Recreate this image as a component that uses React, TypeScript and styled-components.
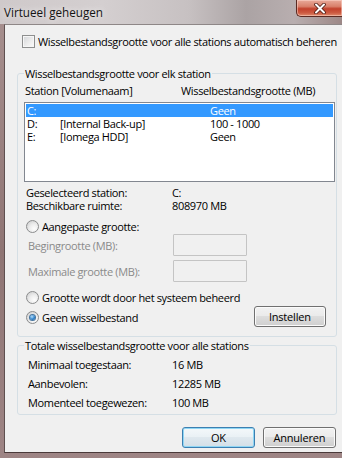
import React from 'react';
import styled, { createGlobalStyle, css } from 'styled-components';

const GlobalStyle = createGlobalStyle`
  html, body {
    margin: 0;
    padding: 0;
  }
  body {
    width: 342px;
    height: 458px;
    overflow: hidden;
    font-family: "Open Sans", "Noto Sans", Arial, sans-serif;
    font-size: 11px;
    letter-spacing: -0.35px;
    color: #000;
  }
`;

const Window = styled.div`
  width: 342px;
  height: 458px;
  display: flex;
  flex-direction: column;
  background: linear-gradient(180deg, #a89190 0%, #8f7574 55%, #9e8585 100%);
`;

const TitleBar = styled.div`
  height: 24px;
  flex: none;
  display: flex;
  align-items: flex-start;
  justify-content: space-between;
  background: linear-gradient(90deg, #cfc9ca 0%, #d4cfd0 30%, #c7c1c2 55%, #aba3a4 72%, #b8aeaf 86%, #9d8887 100%);
`;

const Title = styled.div`
  padding: 5px 0 0 4px;
  font-size: 11.7px;
  letter-spacing: 0;
  line-height: 15px;
  color: #141414;
  text-shadow: 0 0 6px rgba(255, 255, 255, 0.9);
`;

const CloseButton = styled.div`
  width: 46px;
  height: 18px;
  margin-top: -1px;
  box-sizing: border-box;
  border: 1px solid #5a2a22;
  border-right: none;
  border-radius: 0 0 0 5px;
  background: linear-gradient(180deg, #e9aa9a 0%, #d9806b 40%, #c2412c 55%, #cc5a41 80%, #e08c6d 100%);
  box-shadow: inset 0 0 0 1px rgba(255, 220, 210, 0.5);
  display: flex;
  align-items: center;
  justify-content: center;
`;

const Frame = styled.div`
  flex: 1;
  display: flex;
  padding: 0 0 5px 4px;
`;

const Client = styled.div`
  flex: 1;
  display: flex;
  flex-direction: column;
  background: #f0f0f0;
  border-left: 1px solid #5f5050;
  border-top: 1px solid #8e8787;
  border-bottom: 1px solid #4a3a3a;
  padding: 9px 8px 0 12px;
  white-space: nowrap;
`;

const CheckRow = styled.label`
  display: flex;
  align-items: center;
  gap: 3px;
  height: 15px;
  line-height: 15px;
  margin-left: 5px;
`;

const CheckBox = styled.span`
  width: 13px;
  height: 13px;
  box-sizing: border-box;
  flex: none;
  border: 1px solid #8e8f8f;
  background: linear-gradient(135deg, #d3d5d8 0%, #eeeeee 60%, #fbfbfb 100%);
  box-shadow: inset 0 0 0 1px #f6f6f6;
`;

const Group = styled.fieldset<{ $top: number; $bottom: number }>`
  margin: ${p => p.$top}px 0 0 0;
  padding: 0 1px ${p => p.$bottom}px 6px;
  border: 1px solid #d5dfe5;
  border-radius: 3px;
  min-width: 0;
`;

const Legend = styled.legend`
  padding: 0 1px;
  line-height: 15px;
`;

const HeaderRow = styled.div`
  display: grid;
  grid-template-columns: 156px 1fr;
  padding-left: 1px;
  margin-top: 2px;
  line-height: 15px;
`;

const ListBox = styled.div`
  margin-top: 4px;
  height: 80px;
  box-sizing: border-box;
  border: 1px solid #828790;
  background: #fff;
  padding: 1px;
`;

const ListRow = styled.div<{ $selected?: boolean }>`
  display: grid;
  grid-template-columns: 33px 150px 1fr;
  height: 13px;
  line-height: 13px;
  padding-left: 1px;
  ${p =>
    p.$selected &&
    css`
      background: #3399ff;
      color: #fff;
    `}
`;

const InfoGrid = styled.div<{ $top: number; $row: number; $label: number; $indent: number }>`
  display: grid;
  grid-template-columns: ${p => p.$label}px 1fr;
  grid-auto-rows: ${p => p.$row}px;
  align-items: center;
  margin-top: ${p => p.$top}px;
  padding-left: ${p => p.$indent}px;
  line-height: 13px;
`;

const RadioRow = styled.label<{ $top: number }>`
  display: flex;
  align-items: center;
  gap: 3px;
  height: 15px;
  line-height: 15px;
  margin-top: ${p => p.$top}px;
  padding-left: 2px;
`;

const Radio = styled.span<{ $checked?: boolean }>`
  width: 13px;
  height: 13px;
  box-sizing: border-box;
  flex: none;
  border-radius: 50%;
  border: 1px solid #8b8c8d;
  background: radial-gradient(circle at 65% 70%, #fdfdfd 0%, #ececec 45%, #c6c7c8 100%);
  display: flex;
  align-items: center;
  justify-content: center;
  ${p =>
    p.$checked &&
    css`
      &::after {
        content: '';
        width: 5px;
        height: 5px;
        border-radius: 50%;
        background: radial-gradient(circle at 40% 35%, #b9e0fa 0%, #2d82cc 55%, #0e4c86 100%);
        box-shadow: 0 0 0 1px #46749e;
      }
    `}
`;

const SizeRow = styled.div<{ $top: number }>`
  display: flex;
  align-items: center;
  height: 22px;
  margin-top: ${p => p.$top}px;
`;

const DimLabel = styled.span`
  width: 145px;
  padding-left: 4px;
  color: #8a8a8a;
`;

const DimInput = styled.div`
  width: 74px;
  height: 22px;
  box-sizing: border-box;
  border: 1px solid #c4c4c4;
  border-radius: 1px;
  background: #f0f0f0;
`;

const OptionRow = styled.div`
  display: flex;
  align-items: flex-start;
  justify-content: space-between;
  height: 21px;
  margin-top: 1px;
`;

const Button = styled.button<{ $default?: boolean; $width: number }>`
  width: ${p => p.$width}px;
  height: 21px;
  padding: 0;
  font: inherit;
  letter-spacing: -0.2px;
  color: #000;
  border: 1px solid #707070;
  border-radius: 3px;
  background: linear-gradient(180deg, #f2f2f2 0%, #ebebeb 45%, #dddddd 50%, #cfcfcf 100%);
  box-shadow: inset 0 0 0 1px #fbfbfb;
  ${p =>
    p.$default &&
    css`
      border-color: #3c7fb1;
      background: linear-gradient(180deg, #f4f8fa 0%, #eaf1f5 45%, #dfe8ee 50%, #d3dfe7 100%);
      box-shadow: inset 0 0 0 1px #8fd6f4;
    `}
`;

const SetButton = styled(Button)`
  margin-right: 9px;
`;

const ButtonRow = styled.div`
  display: flex;
  justify-content: flex-end;
  gap: 8px;
  margin: 12px 1px 0 0;
`;

const drives = [
  { letter: 'C:', name: '', size: 'Geen', selected: true },
  { letter: 'D:', name: '[Internal Back-up]', size: '100 - 1000' },
  { letter: 'E:', name: '[Iomega HDD]', size: 'Geen' },
];

const totals = [
  ['Minimaal toegestaan:', '16 MB'],
  ['Aanbevolen:', '12285 MB'],
  ['Momenteel toegewezen:', '100 MB'],
];

const CloseGlyph = () => (
  <svg width="14" height="11" viewBox="0 0 14 11">
    <path d="M3 1.5 L11 9.5 M11 1.5 L3 9.5" stroke="#4a1810" strokeWidth="3.6" strokeLinecap="round" />
    <path d="M3 1.5 L11 9.5 M11 1.5 L3 9.5" stroke="#ffffff" strokeWidth="2" strokeLinecap="round" />
  </svg>
);

const App = () => (
  <>
    <GlobalStyle />
    <Window>
      <TitleBar>
        <Title>Virtueel geheugen</Title>
        <CloseButton>
          <CloseGlyph />
        </CloseButton>
      </TitleBar>
      <Frame>
        <Client>
          <CheckRow>
            <CheckBox />
            Wisselbestandsgrootte voor alle stations automatisch beheren
          </CheckRow>

          <Group $top={17} $bottom={9}>
            <Legend>Wisselbestandsgrootte voor elk station</Legend>
            <HeaderRow>
              <span>Station [Volumenaam]</span>
              <span>Wisselbestandsgrootte (MB)</span>
            </HeaderRow>
            <ListBox>
              {drives.map(d => (
                <ListRow key={d.letter} $selected={d.selected}>
                  <span>{d.letter}</span>
                  <span>{d.name}</span>
                  <span>{d.size}</span>
                </ListRow>
              ))}
            </ListBox>
            <InfoGrid $top={4} $row={13} $label={146} $indent={2}>
              <span>Geselecteerd station:</span>
              <span>C:</span>
              <span>Beschikbare ruimte:</span>
              <span>808970 MB</span>
            </InfoGrid>
            <RadioRow $top={7}>
              <Radio />
              Aangepaste grootte:
            </RadioRow>
            <SizeRow $top={0}>
              <DimLabel>Begingrootte (MB):</DimLabel>
              <DimInput />
            </SizeRow>
            <SizeRow $top={4}>
              <DimLabel>Maximale grootte (MB):</DimLabel>
              <DimInput />
            </SizeRow>
            <RadioRow $top={8}>
              <Radio />
              Grootte wordt door het systeem beheerd
            </RadioRow>
            <OptionRow>
              <RadioRow $top={4}>
                <Radio $checked />
                Geen wisselbestand
              </RadioRow>
              <SetButton $width={72}>Instellen</SetButton>
            </OptionRow>
          </Group>

          <Group $top={1} $bottom={2}>
            <Legend>Totale wisselbestandsgrootte voor alle stations</Legend>
            <InfoGrid $top={2} $row={19} $label={144} $indent={4}>
              {totals.map(([label, value]) => (
                <React.Fragment key={label}>
                  <span>{label}</span>
                  <span>{value}</span>
                </React.Fragment>
              ))}
            </InfoGrid>
          </Group>

          <ButtonRow>
            <Button $default $width={73}>OK</Button>
            <Button $width={73}>Annuleren</Button>
          </ButtonRow>
        </Client>
      </Frame>
    </Window>
  </>
);

export default App;
